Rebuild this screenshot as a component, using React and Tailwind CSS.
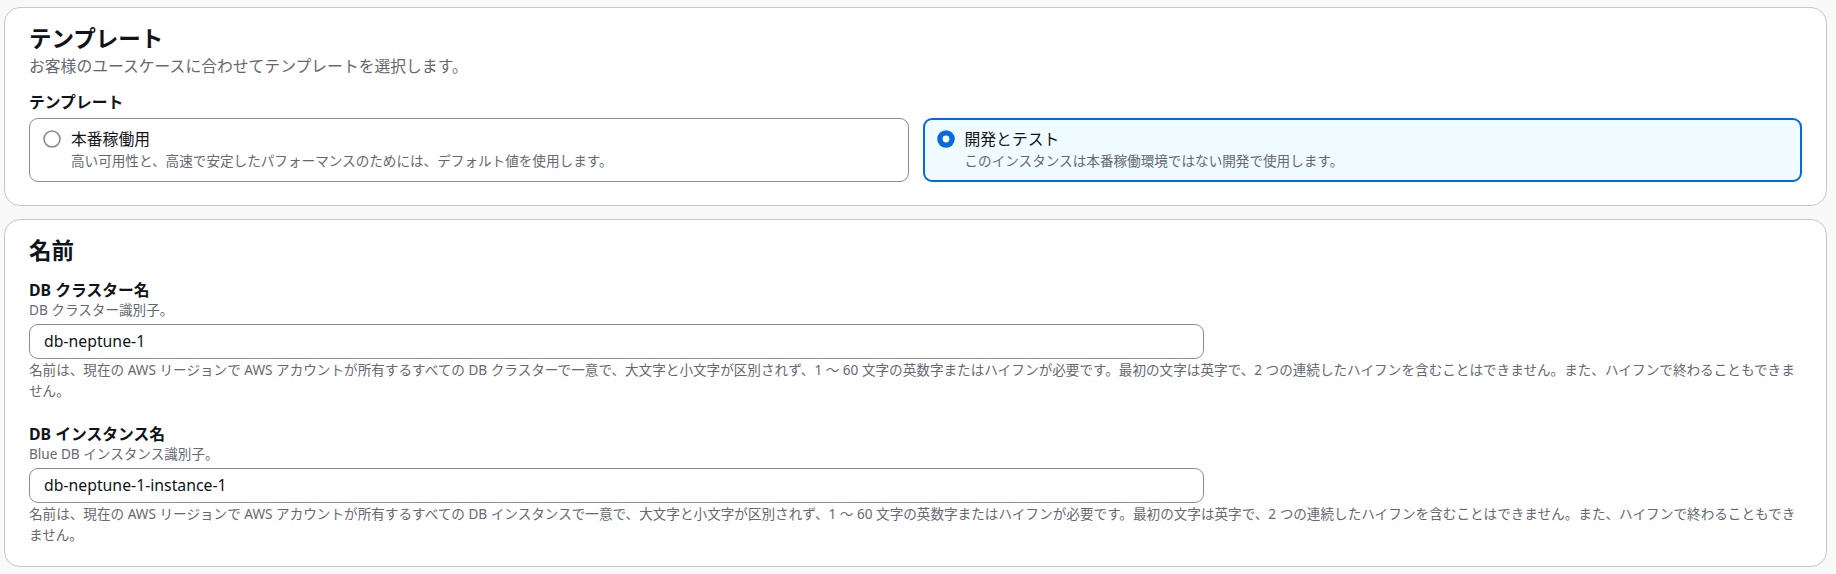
import React from 'react';

const FONT = { fontFamily: '"Noto Sans", "Noto Sans CJK JP", sans-serif' };

const Radio = ({ checked }) => (
  <span className="flex h-[22px] w-[18px] shrink-0 items-center">
    {checked ? (
      <svg width="18" height="18" viewBox="0 0 18 18">
        <circle cx="9" cy="9" r="8.8" fill="#006ce0" />
        <circle cx="9" cy="9" r="3.4" fill="#ffffff" />
      </svg>
    ) : (
      <svg width="18" height="18" viewBox="0 0 18 18">
        <circle cx="9" cy="9" r="8" fill="#ffffff" stroke="#8c8c94" strokeWidth="1.6" />
      </svg>
    )}
  </span>
);

const Tile = ({ checked, title, desc }) => (
  <div
    className={
      checked
        ? 'flex gap-[10px] rounded-[9px] border-2 border-[#006ce0] bg-[#f0fbff] pl-[12px] pr-[12px] pt-[8px] pb-[8px]'
        : 'flex gap-[10px] rounded-[9px] border border-[#8c8c94] bg-white pl-[13px] pr-[13px] pt-[9px] pb-[9px]'
    }
  >
    <Radio checked={checked} />
    <div>
      <div className="text-[15.8px] leading-[22px] text-[#0f141a]">{title}</div>
      <div className="text-[13.6px] leading-[22px] text-[#656871]">{desc}</div>
    </div>
  </div>
);

const Field = ({ label, desc, value, help, className }) => (
  <div className={className}>
    <div className="text-[15.8px] font-bold leading-[22px] text-[#0f141a]">{label}</div>
    <div className="text-[13.6px] leading-[18px] text-[#656871]">{desc}</div>
    <div className="mt-[5px] flex h-[35px] w-[1175px] items-center rounded-[9px] border border-[#8c8c94] bg-white px-[14px] text-[15.8px] text-[#0f141a]">
      {value}
    </div>
    <p className="text-[13.6px] leading-[21px] text-[#656871]">{help}</p>
  </div>
);

export default function App() {
  return (
    <div className="min-h-screen bg-[#f9f9f9] pl-[4px] pr-[9px] pt-[7px] pb-[6px]" style={FONT}>
      {/* テンプレート */}
      <section className="rounded-[16px] border border-[#c6c6cd] bg-white px-[24px] pt-[16px] pb-[23px]">
        <h2 className="text-[22.5px] font-bold leading-[29px] text-[#0f141a]">テンプレート</h2>
        <p className="mt-[2px] text-[15.8px] leading-[22px] text-[#656871]">
          お客様のユースケースに合わせてテンプレートを選択します。
        </p>
        <div className="mt-[14px] text-[15.8px] font-bold leading-[22px] text-[#0f141a]">テンプレート</div>
        <div className="mt-[5px] grid grid-cols-2 gap-[14px]">
          <Tile
            title="本番稼働用"
            desc="高い可用性と、高速で安定したパフォーマンスのためには、デフォルト値を使用します。"
          />
          <Tile
            checked
            title="開発とテスト"
            desc="このインスタンスは本番稼働環境ではない開発で使用します。"
          />
        </div>
      </section>

      {/* 名前 */}
      <section className="mt-[13px] rounded-[16px] border border-[#c6c6cd] bg-white px-[24px] pt-[16px] pb-[21px]">
        <h2 className="text-[22.5px] font-bold leading-[29px] text-[#0f141a]">名前</h2>
        <Field
          className="mt-[14px]"
          label="DB クラスター名"
          desc="DB クラスター識別子。"
          value="db-neptune-1"
          help="名前は、現在の AWS リージョンで AWS アカウントが所有するすべての DB クラスターで一意で、大文字と小文字が区別されず、1 ～ 60 文字の英数字またはハイフンが必要です。最初の文字は英字で、2 つの連続したハイフンを含むことはできません。また、ハイフンで終わることもできません。"
        />
        <Field
          className="mt-[22px]"
          label="DB インスタンス名"
          desc="Blue DB インスタンス識別子。"
          value="db-neptune-1-instance-1"
          help="名前は、現在の AWS リージョンで AWS アカウントが所有するすべての DB インスタンスで一意で、大文字と小文字が区別されず、1 ～ 60 文字の英数字またはハイフンが必要です。最初の文字は英字で、2 つの連続したハイフンを含むことはできません。また、ハイフンで終わることもできません。"
        />
      </section>
    </div>
  );
}
